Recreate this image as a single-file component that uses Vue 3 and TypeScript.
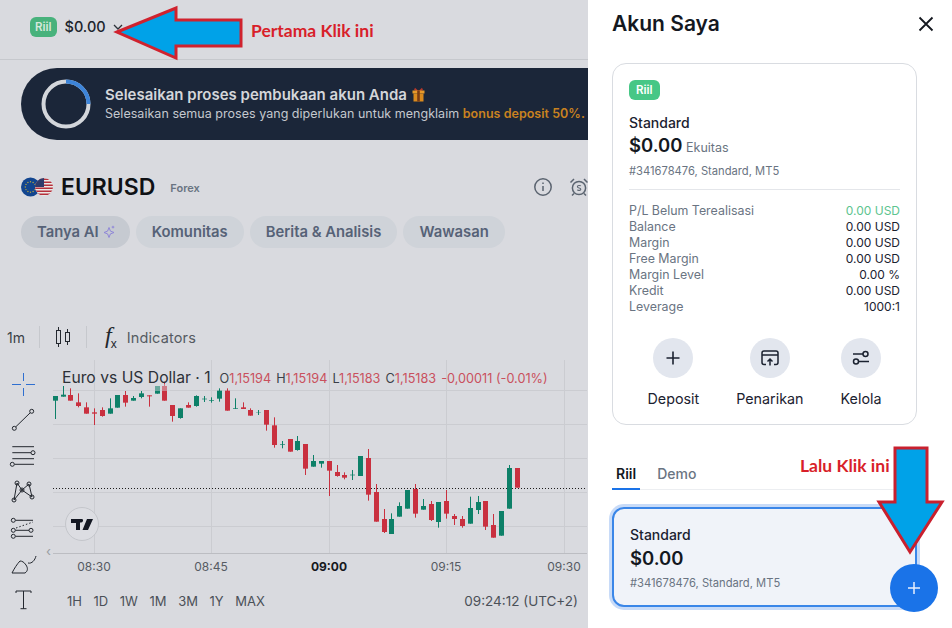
<template>
  <div class="screen">
    <section class="market">
      <header class="topbar">
        <span class="badge badge-dim">Riil</span>
        <span class="top-balance">$0.00</span>
        <svg class="chevron" width="10" height="6" viewBox="0 0 10 6"><path d="M1 1l4 4 4-4" fill="none" stroke="#2b3038" stroke-width="1.3" /></svg>
      </header>

      <div class="banner">
        <svg class="ring" width="50" height="50" viewBox="0 0 50 50">
          <circle cx="25" cy="25" r="22.5" fill="none" stroke="#d3d6db" stroke-width="4" />
          <path d="M25 2.5A22.5 22.5 0 0 1 47.5 25" fill="none" stroke="#3d84d8" stroke-width="4" />
        </svg>
        <div class="banner-text">
          <div class="banner-title">
            Selesaikan proses pembukaan akun Anda
            <svg width="13" height="15" viewBox="0 0 13 15">
              <path d="M6.5 4L3 .8 2 3l2 1zM6.500 4L10 .8 11 3 9 4z" fill="#b5392a" />
              <rect x="0.5" y="3.5" width="12" height="3" fill="#e89a2a" />
              <rect x="1.5" y="6.5" width="10" height="8" fill="#d98a1e" />
              <rect x="5.2" y="3.5" width="2.6" height="11" fill="#7a3b12" />
            </svg>
          </div>
          <div class="banner-sub">Selesaikan semua proses yang diperlukan untuk mengklaim <b>bonus deposit 50%.</b></div>
        </div>
      </div>

      <div class="symbol-row">
        <svg class="flag" width="32" height="20" viewBox="0 0 32 20">
          <defs>
            <clipPath id="usClip"><circle cx="23" cy="10" r="9" /></clipPath>
          </defs>
          <circle cx="9.500" cy="10" r="9.500" fill="#12458f" />
          <circle v-for="s in euStars" :key="s.x" :cx="s.x" :cy="s.y" r="0.7" fill="#b9a53e" />
          <g clip-path="url(#usClip)">
            <rect x="13" y="0" width="20" height="20" fill="#ece9e6" />
            <rect v-for="y in usStripes" :key="y" x="13" :y="y" width="20" height="1.5" fill="#b5303c" />
            <rect x="13" y="0" width="10" height="10" fill="#2f3c6b" />
          </g>
        </svg>
        <span class="symbol">EURUSD</span>
        <span class="symbol-kind">Forex</span>
        <div class="symbol-actions">
          <svg width="20" height="20" viewBox="0 0 20 20" fill="none" stroke="#5b6470" stroke-width="1.5">
            <circle cx="10" cy="10" r="8.2" />
            <path d="M10 9v5M10 5.6v1.4" />
          </svg>
          <svg width="20" height="20" viewBox="0 0 20 20" fill="none" stroke="#5b6470" stroke-width="1.5">
            <circle cx="10" cy="11" r="6.6" />
            <path d="M1.500 5.500L5 2M18.500 5.500L15 2M5 16.500l-2 2M15 16.500l2 2" />
            <path d="M11.800 9c-.5-.8-3.400-.9-3.400.7 0 1.700 3.400.8 3.400 2.500 0 1.500-2.900 1.500-3.500.6" stroke-width="1.100" />
          </svg>
        </div>
      </div>

      <nav class="pills">
        <span class="pill pill-active">Tanya AI
          <svg width="14" height="14" viewBox="0 0 14 14" fill="none" stroke="#8f86d8" stroke-width="1">
            <path d="M7 2.500l1.400 3.600L12 7.500 8.400 8.900 7 12.500 5.600 8.900 2 7.500l3.600-1.400z" />
            <path d="M11 .8v2.600M9.700 2.100h2.600" />
          </svg>
        </span>
        <span v-for="p in pills" :key="p" class="pill">{{ p }}</span>
      </nav>

      <div class="toolbar">
        <span class="interval">1m</span>
        <i class="tool-sep" />
        <svg class="candle-icon" width="18" height="22" viewBox="0 0 18 22" fill="none" stroke="#23272e" stroke-width="1">
          <rect x="2.500" y="4.500" width="4" height="13" />
          <path d="M4.500 1v3.500M4.500 17.500V21" />
          <rect x="11.500" y="6.500" width="4" height="9" />
          <path d="M13.500 3v3.500M13.500 15.500V19" />
        </svg>
        <i class="tool-sep" />
        <span class="fx"><i>f</i><sub>x</sub></span>
        <span class="indicators">Indicators</span>
      </div>

      <div class="workspace">
        <aside class="tools">
          <svg v-for="t in drawTools" :key="t.name" width="28" height="28" viewBox="0 0 28 28" fill="none" :stroke="t.color" stroke-width="1">
            <path :d="t.lines" />
            <path v-if="t.dashed" :d="t.dashed" stroke-dasharray="1.500 2" />
            <circle v-for="c in t.dots" :key="c[0] + '-' + c[1]" :cx="c[0]" :cy="c[1]" r="2" />
          </svg>
        </aside>

        <div class="chart-col">
          <div class="chart">
            <svg width="535" height="215" viewBox="53 360 535 215">
              <g stroke="#cbccd1" stroke-width="1">
                <path v-for="y in gridY" :key="y" :d="`M53 ${y}.5H587`" />
                <path v-for="x in gridX" :key="x" :d="`M${x}.5 360V553`" />
              </g>
              <path d="M53 553.500H587" stroke="#bcbdc2" />
              <path d="M53 488.500H586" stroke="#1c1c1c" stroke-dasharray="1 2" />
              <g v-for="(c, i) in candles" :key="i" :fill="c.up ? '#0d8068' : '#c9303f'" :stroke="c.up ? '#0d8068' : '#c9303f'">
                <path :d="`M${c.x} ${c.wickTop}V${c.wickBottom}`" stroke-width="1" />
                <rect :x="c.x - 2.500" :y="c.top" width="5" :height="c.height" stroke="none" />
              </g>
              <rect x="150" y="384" width="20" height="7" fill="#d9dadf" opacity="0.45" />
              <g class="time-labels">
                <text v-for="l in timeLabels" :key="l.text" :x="l.x" y="571" text-anchor="middle" :class="{ strong: l.strong }">{{ l.text }}</text>
              </g>
            </svg>
            <div class="legend">
              <span class="legend-title">Euro vs US Dollar · 1</span>
              <span class="legend-values">
                <template v-for="v in ohlc" :key="v[0]"><span class="ohlc-key">{{ v[0] }}</span><span class="down">{{ v[1] }}</span></template>
                <span class="down change">-0,00011 (-0.01%)</span>
              </span>
            </div>
            <div class="tv-logo">
              <svg width="22" height="11" viewBox="0 0 22 11"><path d="M0 0h9v11H5V4H0zM10 3.500a2 2 0 1 1 .01 0zM16 0h6l-5 11h-5.500z" fill="#131722" /></svg>
            </div>
            <span class="collapse">‹</span>
          </div>
          <div class="ranges">
            <span v-for="r in ranges" :key="r" class="range">{{ r }}</span>
            <span class="clock">09:24:12 (UTC+2)</span>
          </div>
        </div>
      </div>
    </section>

    <aside class="panel">
      <div class="panel-head">
        <h2>Akun Saya</h2>
        <svg width="18" height="18" viewBox="0 0 18 18"><path d="M2.500 2.500l13 13M15.500 2.500l-13 13" stroke="#14181f" stroke-width="1.800" fill="none" /></svg>
      </div>

      <div class="account">
        <span class="badge">Riil</span>
        <div class="acc-name">Standard</div>
        <div class="acc-equity"><b>$0.00</b> <span>Ekuitas</span></div>
        <div class="acc-id">#341678476, Standard, MT5</div>
        <hr />
        <div v-for="r in stats" :key="r.label" class="stat">
          <span>{{ r.label }}</span>
          <span class="stat-value" :class="{ green: r.green }">{{ r.value }}</span>
        </div>
        <div class="actions">
          <div class="action">
            <span class="action-icon">
              <svg width="18" height="18" viewBox="0 0 18 18"><path d="M9 2.500v13M2.500 9h13" stroke="#1b2230" stroke-width="1.600" /></svg>
            </span>
            Deposit
          </div>
          <div class="action">
            <span class="action-icon">
              <svg width="20" height="18" viewBox="0 0 20 18" fill="none" stroke="#1b2230" stroke-width="1.500">
                <path d="M6 15.500H4a2 2 0 0 1-2-2V4a2 2 0 0 1 2-2h12a2 2 0 0 1 2 2v9.500a2 2 0 0 1-2 2h-2M2 6h16" />
                <path d="M10 16.500V10M7.500 12.500L10 10l2.500 2.500" />
              </svg>
            </span>
            Penarikan
          </div>
          <div class="action">
            <span class="action-icon">
              <svg width="18" height="16" viewBox="0 0 18 16" fill="none" stroke="#1b2230" stroke-width="1.500">
                <circle cx="13.500" cy="4" r="2.500" />
                <path d="M1 4h10" />
                <circle cx="4" cy="11.500" r="2.500" />
                <path d="M6.500 11.500H17" />
              </svg>
            </span>
            Kelola
          </div>
        </div>
      </div>

      <div class="tabs">
        <span class="tab tab-on">Riil</span>
        <span class="tab">Demo</span>
      </div>

      <div class="selected">
        <div class="acc-name">Standard</div>
        <div class="acc-equity"><b>$0.00</b></div>
        <div class="acc-id">#341678476, Standard, MT5</div>
      </div>
    </aside>

    <button class="fab" aria-label="Tambah akun">
      <svg width="16" height="16" viewBox="0 0 16 16"><path d="M8 2v12M2 8h12" stroke="#e8f0fd" stroke-width="1.500" /></svg>
    </button>

    <svg class="arrows" width="952" height="628" viewBox="0 0 952 628">
      <path d="M117 32L176 8V20H241V46H176V58Z" fill="#00a2e8" stroke="#d0222e" stroke-width="3" />
      <path d="M895 448H927V502H942L910 552L879 502H895Z" fill="#00a2e8" stroke="#c9202e" stroke-width="3" />
    </svg>
    <span class="note note-first">Pertama Klik ini</span>
    <span class="note note-next">Lalu Klik ini</span>
  </div>
</template>

<script setup lang="ts">
interface DrawTool {
  name: string;
  lines: string;
  color: string;
  dots: number[][];
  dashed?: string;
}

interface Candle {
  x: number;
  top: number;
  height: number;
  wickTop: number;
  wickBottom: number;
  up: boolean;
}

const pills = ['Komunitas', 'Berita & Analisis', 'Wawasan'];
const ranges = ['1H', '1D', '1W', '1M', '3M', '1Y', 'MAX'];
const gridY = [390, 424, 458, 492, 526];
const gridX = [94, 211, 329, 446, 564];
const usStripes = [1.5, 4.5, 7.5, 10.5, 13.5, 16.5];

const euStars = Array.from({ length: 12 }, (_, i) => ({
  x: 9.5 + 5.2 * Math.cos((i * Math.PI) / 6),
  y: 10 + 5.2 * Math.sin((i * Math.PI) / 6),
}));

const ohlc = [
  ['O', '1,15194'],
  ['H', '1,15194'],
  ['L', '1,15183'],
  ['C', '1,15183'],
];

const timeLabels = [
  { text: '08:30', x: 94 },
  { text: '08:45', x: 211 },
  { text: '09:00', x: 329, strong: true },
  { text: '09:15', x: 446 },
  { text: '09:30', x: 564 },
];

const stats = [
  { label: 'P/L Belum Terealisasi', value: '0.00 USD', green: true },
  { label: 'Balance', value: '0.00 USD' },
  { label: 'Margin', value: '0.00 USD' },
  { label: 'Free Margin', value: '0.00 USD' },
  { label: 'Margin Level', value: '0.00 %' },
  { label: 'Kredit', value: '0.00 USD' },
  { label: 'Leverage', value: '1000:1' },
];

const drawTools: DrawTool[] = [
  { name: 'cross', lines: 'M14.500 3v8M14.500 18v8M3 14.500h9M17 14.500h9', color: '#2f6fd0', dots: [] },
  { name: 'trend', lines: 'M6.700 20.900L21.300 6.700', color: '#23272e', dots: [[5.3, 22.3], [22.7, 5.3]] },
  { name: 'lines', lines: 'M3.300 4.700H25M3.300 10.700H22M3.300 16.700H25M5.500 22.300H25', color: '#23272e', dots: [[24, 10.7], [3.3, 22.3]] },
  { name: 'pattern', lines: 'M5 22L8 5l5 7 7-6 3 13-10-7-8 10', color: '#23272e', dots: [[5, 22], [8, 5], [13, 12], [20, 6], [23, 19]] },
  { name: 'fib', lines: 'M6.500 6.300H24M6.500 16.300H20M6.500 22.300H24', dashed: 'M7 14L24 8', color: '#23272e', dots: [[4.3, 6.3], [4.3, 16.3], [4.3, 22.3], [22, 16.3]] },
  { name: 'brush', lines: 'M3 23h13c3-2 3-5 1-8-2-3-4-4-6-4-3 3-6 8-8 12zM19 13c4 1 7-3 8-7', color: '#23272e', dots: [] },
  { name: 'text', lines: 'M7 7V5h15v2M14.500 5v17.700M11.500 22.700h6', color: '#23272e', dots: [] },
];

// x in 1/3 px, then body top/bottom and wick top/bottom, as read off the chart
const raw: [number, number, number, number, number, number][] = [
  [166, 228, 242, 228, 297, 1], [190, 224, 230, 198, 230, 1], [211, 225, 242, 205, 242, 0],
  [235, 247, 258, 220, 262, 0], [259, 262, 281, 247, 281, 0], [283, 277, 281, 265, 315, 0],
  [307, 270, 288, 262, 290, 0], [331, 265, 281, 235, 281, 1], [352, 225, 263, 225, 263, 1],
  [376, 225, 248, 213, 260, 0], [400, 234, 242, 228, 242, 1], [424, 220, 231, 213, 235, 1],
  [448, 226, 229, 226, 260, 0], [472, 198, 221, 198, 221, 1], [493, 198, 242, 185, 242, 0],
  [517, 255, 288, 255, 305, 0], [541, 265, 294, 265, 296, 1], [565, 255, 263, 247, 263, 0],
  [589, 228, 258, 226, 260, 1], [613, 236, 238, 228, 246, 1], [634, 240, 242, 232, 248, 1],
  [658, 212, 236, 205, 245, 1], [682, 212, 272, 205, 272, 0], [706, 265, 267, 235, 267, 1],
  [730, 262, 267, 247, 267, 0], [751, 270, 287, 265, 287, 0], [775, 277, 278, 270, 285, 1],
  [799, 270, 314, 270, 332, 0], [823, 316, 375, 292, 383, 0], [847, 372, 374, 363, 385, 1],
  [871, 357, 395, 357, 395, 0], [892, 363, 390, 348, 392, 1],
];

// same reading for the right half of the chart, which starts at x 290, y 360
const rawRight: [number, number, number, number, number, number][] = [
  [46, 252, 326, 252, 345, 0], [70, 303, 320, 285, 320, 1], [94, 303, 311, 303, 323, 1],
  [118, 303, 332, 303, 408, 0], [142, 336, 348, 315, 350, 0], [163, 345, 353, 337, 358, 0],
  [187, 344, 346, 330, 360, 1], [211, 288, 348, 288, 348, 1], [235, 294, 404, 267, 422, 0],
  [259, 396, 485, 372, 485, 0], [283, 477, 516, 447, 519, 0], [304, 477, 522, 460, 522, 1],
  [328, 438, 470, 427, 470, 1], [352, 390, 446, 390, 446, 1], [376, 387, 461, 372, 473, 0],
  [400, 438, 449, 417, 449, 1], [424, 432, 480, 423, 483, 0], [445, 426, 486, 426, 503, 1],
  [469, 423, 461, 390, 476, 0], [493, 468, 477, 462, 495, 0], [517, 477, 498, 468, 503, 0],
  [541, 444, 491, 410, 491, 1], [565, 426, 450, 408, 462, 1], [586, 423, 500, 423, 510, 0],
  [610, 495, 533, 462, 533, 0], [634, 453, 527, 453, 527, 1], [658, 324, 446, 315, 446, 1],
  [682, 324, 383, 324, 383, 0],
];

const toCandle = (r: number[], ox: number, oy: number): Candle => ({
  x: Math.round(ox + r[0] / 3) + 0.5,
  top: oy + r[1] / 3,
  height: (r[2] - r[1]) / 3,
  wickTop: oy + r[3] / 3,
  wickBottom: oy + r[4] / 3,
  up: r[5] === 1,
});

const candles: Candle[] = [
  ...raw.map((r) => toCandle(r, 0, 320)),
  ...rawRight.map((r) => toCandle(r, 290, 360)),
];
</script>

<style>
html,
body {
  margin: 0;
  background: #fff;
}
</style>

<style scoped>
.screen {
  position: relative;
  display: flex;
  width: 952px;
  height: 628px;
  overflow: hidden;
  font-family: Inter, "Open Sans", sans-serif;
  color: #1b2230;
}

.market {
  width: 588px;
  flex: none;
  background: #d9dadf;
  overflow: hidden;
}

.topbar {
  display: flex;
  align-items: center;
  height: 60px;
  padding: 0 0 6px 30px;
  box-sizing: border-box;
  border-bottom: 1px solid #c6c8cd;
}

.badge {
  display: block;
  width: fit-content;
  padding: 0 7px;
  height: 20px;
  line-height: 20px;
  border-radius: 6px;
  background: #47c786;
  color: #fff;
  font-size: 11.500px;
  font-weight: 600;
}

.badge-dim {
  padding: 0 5px;
  background: #48b27c;
  color: #d6e8dd;
}

.top-balance {
  margin-left: 8px;
  font-size: 14.500px;
  font-weight: 500;
  color: #20242c;
}

.chevron {
  margin-left: 7px;
}

.banner {
  display: flex;
  align-items: center;
  height: 72px;
  margin: 8px 0 0 21px;
  padding-left: 20px;
  box-sizing: border-box;
  border-radius: 36px 0 0 36px;
  background: #1b2639;
  white-space: nowrap;
}

.banner-text {
  margin: -3px 0 0 14px;
}

.banner-title {
  display: flex;
  align-items: center;
  gap: 5px;
  font-size: 15px;
  font-weight: 600;
  color: #d4d6da;
}

.banner-sub {
  margin-top: 2px;
  font-size: 12.500px;
  letter-spacing: 0.03px;
  color: #c4c8ce;
}

.banner-sub b {
  color: #c98220;
  font-weight: 600;
}

.symbol-row {
  display: flex;
  align-items: center;
  height: 34px;
  margin: 30px 0 0 21px;
}

.symbol {
  margin-left: 8px;
  font-size: 23px;
  font-weight: 600;
  color: #0f1115;
}

.symbol-kind {
  margin: 2px 0 0 15px;
  font-size: 11px;
  font-weight: 600;
  color: #6a7482;
}

.symbol-actions {
  display: flex;
  gap: 16px;
  margin-left: auto;
  margin-right: -1px;
}

.pills {
  display: flex;
  gap: 6px;
  margin: 12px 0 0 21px;
}

.pill {
  display: flex;
  align-items: center;
  gap: 3px;
  height: 32px;
  padding: 0 16px;
  border-radius: 16px;
  background: #cfd3d9;
  color: #566277;
  font-size: 14.800px;
  font-weight: 600;
}

.pill-active {
  padding-right: 14px;
  background: #c6cad1;
}

.toolbar {
  display: flex;
  align-items: center;
  height: 30px;
  margin-top: 74px;
  padding-left: 7px;
  font-size: 14px;
  color: #3a3f47;
}

.tool-sep {
  width: 1px;
  height: 22px;
  margin: 0 14px;
  background: #c6c8cd;
}

.candle-icon {
  flex: none;
}

.fx {
  margin-left: 4px;
  font: 24px "Liberation Serif", serif;
  line-height: 24px;
  color: #23272e;
}

.fx sub {
  margin-left: -1px;
  font: 12px "Liberation Sans", sans-serif;
}

.indicators {
  margin-left: 10px;
  font-size: 14.500px;
  letter-spacing: 0.15px;
  color: #555a62;
}

.workspace {
  display: flex;
  margin-top: 8px;
}

.tools {
  display: flex;
  flex-direction: column;
  gap: 8px;
  width: 46px;
  flex: none;
  padding: 10px 0 0 9px;
  box-sizing: border-box;
}

.chart-col {
  margin-left: 7px;
}

.chart {
  position: relative;
  width: 535px;
  height: 215px;
}

.chart > svg {
  display: block;
}

.time-labels text {
  font-size: 12px;
  fill: #565b63;
}

.time-labels text.strong {
  fill: #16181d;
  font-weight: 700;
}

.legend {
  position: absolute;
  left: 9px;
  top: 8px;
  display: flex;
  align-items: baseline;
  gap: 9px;
  white-space: nowrap;
}

.legend-title {
  font-size: 15.700px;
  color: #2c3037;
}

.legend-values {
  font-size: 12.700px;
}

.ohlc-key {
  color: #3a3f47;
}

.down {
  margin-right: 5px;
  color: #c9505d;
}

.change {
  margin-right: 0;
}

.tv-logo {
  position: absolute;
  left: 12px;
  top: 147px;
  display: flex;
  align-items: center;
  justify-content: center;
  width: 32px;
  height: 32px;
  border: 1px solid #c4c6cb;
  border-radius: 50%;
  background: #dcdde2;
}

.collapse {
  position: absolute;
  left: -7px;
  top: 183px;
  font-size: 13px;
  color: #9a9da3;
}

.ranges {
  display: flex;
  align-items: center;
  height: 34px;
  margin-top: 9px;
  padding-left: 14px;
  font-size: 13px;
  color: #4b5058;
}

.range {
  margin-right: 11.600px;
}

.clock {
  margin-left: auto;
  margin-right: 10px;
  font-size: 13.500px;
}

.panel {
  flex: 1;
  padding: 0 35px 0 24px;
  background: #fff;
}

.panel-head {
  display: flex;
  align-items: center;
  justify-content: space-between;
  height: 47px;
  margin-right: -18px;
}

.panel-head h2 {
  margin: 0;
  font-size: 21px;
  font-weight: 600;
  color: #14181f;
}

.account {
  margin-top: 16px;
  height: 362px;
  padding: 16px 16px 0;
  box-sizing: border-box;
  border: 1px solid #d9dce1;
  border-radius: 14px;
}

.acc-name {
  margin-top: 12px;
  font-size: 14px;
  font-weight: 500;
  line-height: 21px;
}

.acc-equity {
  font-size: 12.500px;
  line-height: 25px;
  color: #6a7482;
}

.acc-equity b {
  font-size: 18.500px;
  font-weight: 600;
  color: #14181f;
}

.acc-id {
  margin-top: 3px;
  font-size: 11.200px;
  line-height: 16px;
  color: #6a7482;
}

hr {
  margin: 10px 0 13px;
  border: 0;
  border-top: 1px solid #e4e6ea;
}

.stat {
  display: flex;
  justify-content: space-between;
  font-size: 12.400px;
  line-height: 16px;
  color: #6a7482;
}

.stat-value {
  font-size: 12px;
  color: #1b2230;
}

.stat-value.green {
  color: #5dc48f;
}

.actions {
  display: flex;
  justify-content: space-around;
  margin-top: 23px;
}

.action {
  display: flex;
  flex-direction: column;
  align-items: center;
  gap: 12px;
  font-size: 14.300px;
}

.action-icon {
  display: flex;
  align-items: center;
  justify-content: center;
  width: 40px;
  height: 40px;
  border-radius: 50%;
  background: #e2e6ee;
}

.tabs {
  display: flex;
  margin-top: 37px;
  height: 27px;
  border-bottom: 1px solid #eceef1;
  font-size: 14px;
}

.tab {
  margin-right: 13px;
  padding: 3px 4px 0;
  color: #6a7482;
  font-weight: 500;
}

.tab-on {
  margin-bottom: -1px;
  border-bottom: 2px solid #1a73e8;
  color: #14181f;
  font-weight: 600;
}

.selected {
  height: 100px;
  margin-top: 17px;
  padding: 3px 16px;
  box-sizing: border-box;
  border: 2px solid #3a86e8;
  border-radius: 12px;
  background: #f0f3f9;
  box-shadow: 0 0 0 3px #c8dbf8;
}

.selected .acc-equity {
  margin-top: 1px;
}

.selected .acc-id {
  margin-top: 2px;
}

.fab {
  position: absolute;
  left: 890px;
  top: 564px;
  display: flex;
  align-items: center;
  justify-content: center;
  width: 48px;
  height: 48px;
  padding: 0;
  border: 0;
  border-radius: 50%;
  background: #1a73e8;
}

.arrows {
  position: absolute;
  left: 0;
  top: 0;
  pointer-events: none;
}

.note {
  position: absolute;
  font-family: Lato, sans-serif;
  font-size: 17.500px;
  font-weight: 700;
  color: #d81f2a;
  white-space: nowrap;
}

.note-first {
  left: 251px;
  top: 20px;
}

.note-next {
  left: 800px;
  top: 455px;
}
</style>
